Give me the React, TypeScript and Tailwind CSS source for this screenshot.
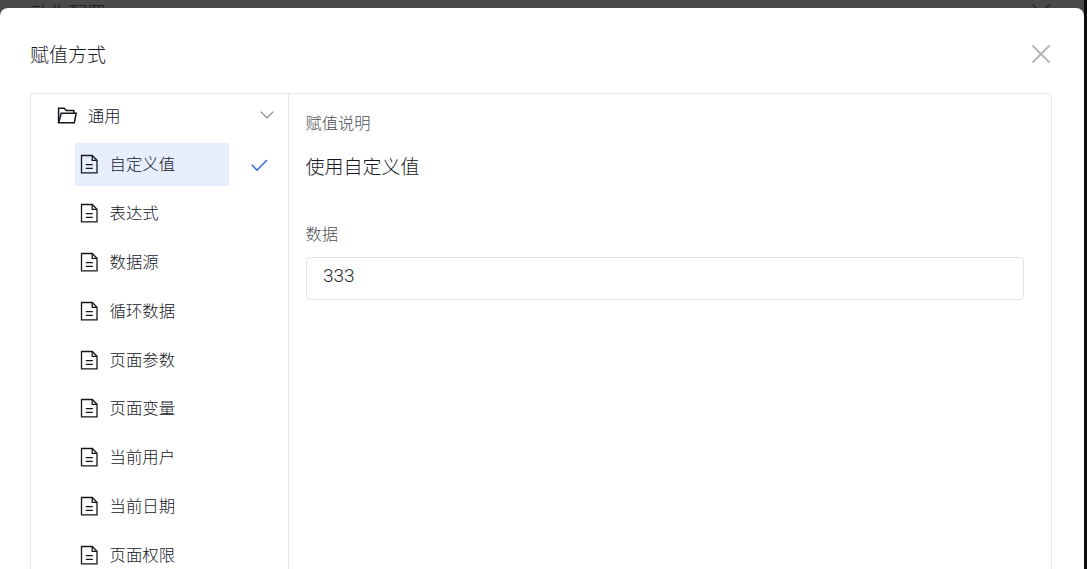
import { useState } from "react";

const items = ["自定义值", "表达式", "数据源", "循环数据", "页面参数", "页面变量", "当前用户", "当前日期", "页面权限"];

function FileIcon() {
  return (
    <svg width="18" height="20" viewBox="0 0 18 20" fill="none" stroke="currentColor" strokeWidth="1.3" className="mb-px shrink-0">
      <path d="M1.5 1.5h10.8l4.7 4.7v12.6H1.5z" />
      <path d="M12.2 1.5v4.8H17M5.8 10.6h7M5.8 14.4h7" />
    </svg>
  );
}

function FolderIcon() {
  return (
    <svg width="20" height="17" viewBox="0 0 20 17" fill="none" stroke="currentColor" strokeWidth="1.5" className="shrink-0">
      <path d="M1.6 15.8V1.2h5.6l2 2.2h7.6v2.6" />
      <path d="M1.6 15.8L4.2 6.2h15l-1.9 9.6z" />
    </svg>
  );
}

function CloseIcon() {
  return (
    <svg width="20" height="20" viewBox="0 0 20 20" fill="none" stroke="currentColor" strokeWidth="1.9" className="shrink-0">
      <path d="M1.5 1.5l17 17M18.5 1.5l-17 17" />
    </svg>
  );
}

export default function App() {
  const [selected, setSelected] = useState("自定义值");
  const [value, setValue] = useState("333");

  return (
    <div className="flex h-[569px] w-[1087px] overflow-hidden bg-[#0c0c0c] font-['Liberation_Sans','Noto_Sans_CJK_SC',sans-serif] font-light text-[#15171e]">
      <div className="flex w-[1084px] flex-col bg-[#4a4a4a]">
        {/* page under the mask */}
        <div className="flex h-2 shrink-0 items-start justify-between overflow-hidden pl-[30px] pr-[33px] text-[#161616]">
          <span className="mt-[3px] text-[19px] leading-6">动作配置</span>
          <span className="mt-[3px] text-[#303030]"><CloseIcon /></span>
        </div>

        <div className="flex min-h-0 flex-1 flex-col rounded-t-lg bg-white pl-[30px] pr-8">
          <div className="flex h-[85px] shrink-0 items-center justify-between">
            <h1 className="mt-[11px] text-[19px] leading-6">赋值方式</h1>
            <button className="mr-px mt-[7px] text-[#b4b5b8]"><CloseIcon /></button>
          </div>

          <div className="flex min-h-0 flex-1 overflow-hidden rounded-t border border-b-0 border-[#e6e7ea]">
            <div className="w-[258px] shrink-0 border-r border-[#e6e7ea]">
              <div className="flex h-[43px] items-center pl-[26px] pr-[14px]">
                <FolderIcon />
                <span className="ml-[11px] flex-1 text-[16.3px] leading-6">通用</span>
                <svg width="14" height="8" viewBox="0 0 14 8" fill="none" stroke="#85878c" strokeWidth="1.2" className="mb-px">
                  <path d="M.7.7L7 7l6.3-6.3" />
                </svg>
              </div>
              <ul className="mt-[6px] flex flex-col gap-[5.9px] pl-11">
                {items.map((name) => (
                  <li key={name} className="flex h-[43px] items-center" onClick={() => setSelected(name)}>
                    <div className={`flex h-[43px] w-[154px] items-center rounded-xs pl-[5px] ${name === selected ? "bg-[#e7eefe]" : ""}`}>
                      <FileIcon />
                      <span className="ml-[11.5px] text-[16.4px] leading-[23px]">{name}</span>
                    </div>
                    {name === selected && (
                      <svg width="17" height="13" viewBox="0 0 17 13" fill="none" stroke="#3168e0" strokeWidth="1.5" className="ml-[22px] mt-[2px]">
                        <path d="M.8 5.8L6 11.2 16 1" />
                      </svg>
                    )}
                  </li>
                ))}
              </ul>
            </div>

            <div className="flex-1 pl-[17px] pr-[27px] pt-[17px]">
              <div className="-ml-[0.5px] text-[16.3px] leading-6 text-[#4c4e54]">赋值说明</div>
              <div className="-ml-[0.5px] mt-[21px] text-[19px] leading-6">使用自定义值</div>
              <div className="-ml-[0.5px] mt-[42px] text-[16.3px] leading-6 text-[#4c4e54]">数据</div>
              <input
                className="mt-[11px] block h-[43px] w-full rounded border border-[#e2e3e6] px-4 pb-[6px] font-[Roboto,sans-serif] text-[19px] font-light text-[#1d1f24] outline-none"
                value={value}
                onChange={(e) => setValue(e.target.value)}
              />
            </div>
          </div>
        </div>
      </div>
    </div>
  );
}
